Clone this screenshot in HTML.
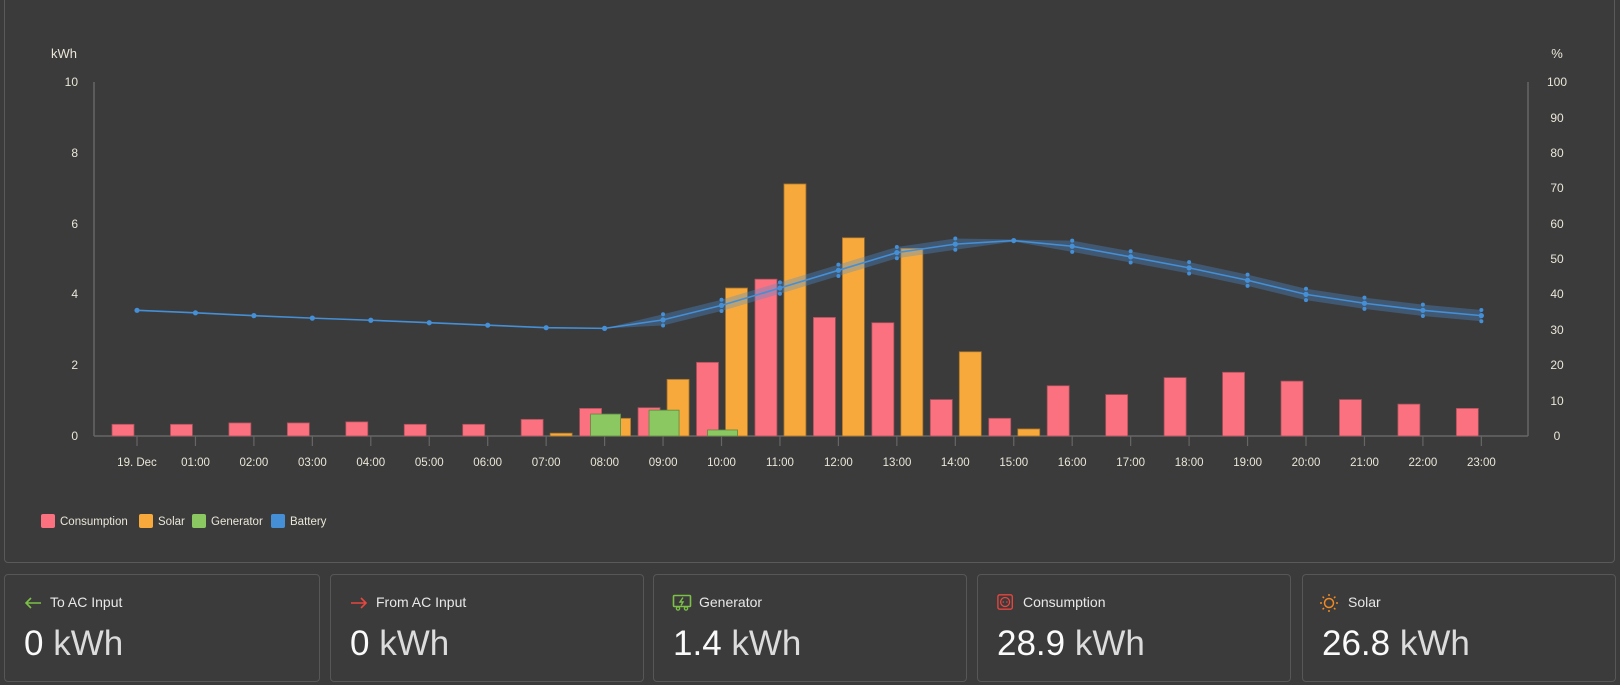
<!DOCTYPE html>
<html><head><meta charset="utf-8">
<style>
html,body{margin:0;padding:0;background:#3b3b3b;width:1620px;height:685px;overflow:hidden;font-family:"Liberation Sans",sans-serif;}
.panel{position:absolute;left:4px;top:-10px;width:1611px;height:573px;border:1px solid #5a5a5a;border-radius:4px;box-sizing:border-box;}
.card{position:absolute;top:574px;height:108px;border:1px solid #575757;border-radius:4px;box-sizing:border-box;}
.lab{position:absolute;left:45px;top:19px;font-size:14px;color:#e8e8e8;}
.val{position:absolute;left:19px;top:49px;font-size:35px;color:#fafafa;}
.val span{color:#dcdcdc}
.ic{position:absolute;left:18px;top:19px;width:20px;height:18px;}
svg text{font-family:"Liberation Sans",sans-serif;}
</style></head><body>
<div class="panel"></div>
<svg id="ch" width="1620" height="685" style="position:absolute;left:0;top:0">
<g fill="#eae6d8" font-size="12">
<text x="64" y="58" text-anchor="middle" font-size="13">kWh</text>
<text x="1557" y="58" text-anchor="middle" font-size="13">%</text>
<g text-anchor="end">
<text x="78" y="86">10</text><text x="78" y="157">8</text><text x="78" y="228">6</text>
<text x="78" y="298">4</text><text x="78" y="369">2</text><text x="78" y="440">0</text>
</g>
<g text-anchor="middle">
<text x="1557" y="86">100</text><text x="1557" y="122">90</text><text x="1557" y="157">80</text>
<text x="1557" y="192">70</text><text x="1557" y="228">60</text><text x="1557" y="263">50</text>
<text x="1557" y="298">40</text><text x="1557" y="334">30</text><text x="1557" y="369">20</text>
<text x="1557" y="405">10</text><text x="1557" y="440">0</text>
</g>
<g text-anchor="middle" font-size="11.5">
<text x="137" y="466">19. Dec</text><text x="195.5" y="466">01:00</text><text x="253.9" y="466">02:00</text>
<text x="312.4" y="466">03:00</text><text x="370.8" y="466">04:00</text><text x="429.3" y="466">05:00</text>
<text x="487.7" y="466">06:00</text><text x="546.2" y="466">07:00</text><text x="604.6" y="466">08:00</text>
<text x="663.1" y="466">09:00</text><text x="721.5" y="466">10:00</text><text x="780" y="466">11:00</text>
<text x="838.4" y="466">12:00</text><text x="897" y="466">13:00</text><text x="955.3" y="466">14:00</text>
<text x="1013.8" y="466">15:00</text><text x="1072.2" y="466">16:00</text><text x="1130.7" y="466">17:00</text>
<text x="1189.1" y="466">18:00</text><text x="1247.6" y="466">19:00</text><text x="1306" y="466">20:00</text>
<text x="1364.5" y="466">21:00</text><text x="1422.9" y="466">22:00</text><text x="1481.4" y="466">23:00</text>
</g>
<g font-size="11.5">
<rect x="41" y="514" width="14" height="14" rx="2" fill="#fb717f"/><text x="60" y="525">Consumption</text>
<rect x="139" y="514" width="14" height="14" rx="2" fill="#f7a93b"/><text x="158" y="525">Solar</text>
<rect x="192" y="514" width="14" height="14" rx="2" fill="#8bc862"/><text x="211" y="525">Generator</text>
<rect x="271" y="514" width="14" height="14" rx="2" fill="#458fd6"/><text x="290" y="525">Battery</text>
</g>
</g>
<line x1="94" y1="82" x2="94" y2="436" stroke="#666" stroke-width="1.5"/>
<line x1="1528" y1="82" x2="1528" y2="436" stroke="#666" stroke-width="1.5"/>
<line x1="94" y1="436" x2="1528" y2="436" stroke="#666" stroke-width="1.5"/>
<g id="dyn"></g>
</svg>

<div class="card" style="left:4px;width:316px">
<svg class="ic" viewBox="0 0 20 18"><path d="M18 9H3M8 4L3 9l5 5" fill="none" stroke="#7cc046" stroke-width="1.6"/></svg>
<div class="lab">To AC Input</div><div class="val">0 <span>kWh</span></div></div>
<div class="card" style="left:330px;width:314px">
<svg class="ic" viewBox="0 0 20 18"><path d="M2 9h15M12 4l5 5-5 5" fill="none" stroke="#e8463f" stroke-width="1.6"/></svg>
<div class="lab">From AC Input</div><div class="val">0 <span>kWh</span></div></div>
<div class="card" style="left:653px;width:314px">
<svg class="ic" viewBox="0 0 20 18"><rect x="1.5" y="1.5" width="17" height="11" rx="1" fill="none" stroke="#7cc046" stroke-width="1.6"/><path d="M11 3.5L8 8h3l-2 3.5" fill="none" stroke="#7cc046" stroke-width="1.4"/><circle cx="6" cy="14.5" r="1.6" fill="none" stroke="#7cc046" stroke-width="1.3"/><circle cx="14" cy="14.5" r="1.6" fill="none" stroke="#7cc046" stroke-width="1.3"/></svg>
<div class="lab">Generator</div><div class="val">1.4 <span>kWh</span></div></div>
<div class="card" style="left:977px;width:314px">
<svg class="ic" viewBox="0 0 20 18" style="left:19px;top:18px;width:18px;height:18px"><rect x="1" y="1" width="16" height="16" rx="2" fill="none" stroke="#e8463f" stroke-width="1.5"/><circle cx="9" cy="9" r="5" fill="none" stroke="#e8463f" stroke-width="1.4"/><circle cx="7" cy="9" r="0.9" fill="#e8463f"/><circle cx="11" cy="9" r="0.9" fill="#e8463f"/></svg>
<div class="lab">Consumption</div><div class="val">28.9 <span>kWh</span></div></div>
<div class="card" style="left:1302px;width:314px">
<svg class="ic" viewBox="0 0 20 20" style="left:16px;top:18px;width:20px;height:20px"><circle cx="10" cy="10" r="4.5" fill="none" stroke="#f08a24" stroke-width="1.5"/><g stroke="#f08a24" stroke-width="1.5"><path d="M10 1v2M10 17v2M1 10h2M17 10h2M3.6 3.6l1.4 1.4M15 15l1.4 1.4M3.6 16.4L5 15M15 5l1.4-1.4"/></g></svg>
<div class="lab">Solar</div><div class="val">26.8 <span>kWh</span></div></div>

<script>
var T=function(i){return 137+i*58.45};
var Y=function(v){return 436-v*35.4};
var P=function(p){return 436-p*3.54};
var cons=[0.33,0.33,0.37,0.37,0.4,0.33,0.33,0.47,0.78,0.8,2.08,4.43,3.35,3.2,1.03,0.5,1.42,1.17,1.65,1.8,1.55,1.03,0.9,0.78];
var sol={7:0.08,8:0.5,9:1.6,10:4.18,11:7.12,12:5.6,13:5.3,14:2.38,15:0.2};
var gen={8:0.62,9:0.73,10:0.17};
var bat=[35.5,34.8,34,33.3,32.7,32,31.3,30.6,30.4,32.8,36.9,41.8,46.8,51.8,54.2,55.2,53.6,50.6,47.5,44,40,37.5,35.5,34];
var s='';
for(var i=0;i<24;i++){var t=T(i);
 s+='<line x1="'+t+'" y1="436" x2="'+t+'" y2="446" stroke="#666" stroke-width="1.2"/>';
 s+='<rect x="'+(t-25)+'" y="'+Y(cons[i])+'" width="22" height="'+(cons[i]*35.4)+'" fill="#fb717f" stroke="#a8505a" stroke-width="0.8"/>';
 if(sol[i]!=null)s+='<rect x="'+(t+4)+'" y="'+Y(sol[i])+'" width="22" height="'+(sol[i]*35.4)+'" fill="#f7a93b" stroke="#a3702a" stroke-width="0.8"/>';
 if(gen[i]!=null)s+='<rect x="'+(t-14)+'" y="'+Y(gen[i])+'" width="30" height="'+(gen[i]*35.4)+'" fill="#8bc862" stroke="#5e8843" stroke-width="0.8"/>';
}
var up=[],dn=[],ln=[];
for(var i=0;i<24;i++){var d=i<9?0:(i==15?0.3:1.6);
 up.push(T(i)+','+P(bat[i]+d));dn.unshift(T(i)+','+P(bat[i]-d));ln.push(T(i)+','+P(bat[i]));}
s+='<polygon points="'+up.concat(dn).join(' ')+'" fill="#4a8fd6" fill-opacity="0.35"/>';
s+='<polyline points="'+ln.join(' ')+'" fill="none" stroke="#458fd6" stroke-width="1.6"/>';
for(var i=0;i<24;i++){s+='<circle cx="'+T(i)+'" cy="'+P(bat[i])+'" r="2.6" fill="#458fd6"/>';
 if(i>=9&&i!=15){s+='<circle cx="'+T(i)+'" cy="'+P(bat[i]+1.6)+'" r="2" fill="#458fd6"/><circle cx="'+T(i)+'" cy="'+P(bat[i]-1.6)+'" r="2" fill="#458fd6"/>';}}
document.getElementById('dyn').innerHTML=s;
</script>
</body></html>
